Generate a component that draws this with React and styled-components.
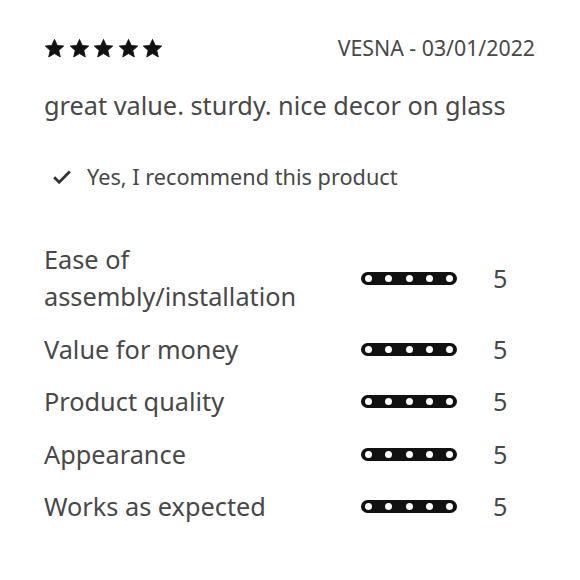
import React from "react";
import styled, { createGlobalStyle } from "styled-components";

const GlobalStyle = createGlobalStyle`
  body {
    margin: 0;
    background: #fff;
    font-family: "Noto Sans", "Open Sans", sans-serif;
    color: #484848;
  }
`;

const StyledReview = styled.div`
  padding: 36px 45px 0 44px;
`;

const StyledHeader = styled.div`
  display: flex;
  align-items: center;
  justify-content: space-between;
  height: 24px;
`;

const StyledStars = styled.div`
  display: flex;
  gap: 3.5px;
`;

const StyledAuthor = styled.span`
  font-size: 21.3px;
  line-height: 24px;
  color: #484848;
`;

const StyledText = styled.p`
  margin: 27px 0 0;
  font-size: 25.3px;
  line-height: 36px;
`;

const StyledRecommend = styled.div`
  display: flex;
  align-items: center;
  gap: 16px;
  margin: 40px 0 0 9px;
  font-size: 21.7px;
  line-height: 28px;
`;

const StyledRatings = styled.div`
  display: flex;
  flex-direction: column;
  gap: 15.5px;
  margin-top: 50px;
`;

const StyledRow = styled.div`
  display: grid;
  grid-template-columns: 1fr 96px 78px;
  align-items: center;
  font-size: 25.3px;
  line-height: 37px;
`;

const StyledLabel = styled.span`
  padding-right: 30px;
`;

const StyledBar = styled.div`
  display: flex;
  align-items: center;
  justify-content: space-between;
  height: 13px;
  padding: 0 4px;
  border-radius: 7px;
  background: #111;
`;

const StyledDot = styled.span`
  width: 7px;
  height: 7px;
  border-radius: 50%;
  background: ${({ filled }) => (filled ? "#fff" : "#111")};
`;

const StyledScore = styled.span`
  padding-left: 36px;
`;

const Star = () => (
  <svg width="21" height="21" viewBox="0 0 24 24">
    <path
      d="M12 1.6l3.1 6.9 7.4.7-5.6 5 1.7 7.4L12 17.8l-6.6 3.8 1.7-7.4-5.6-5 7.4-.7z"
      fill="#111"
      stroke="#111"
      strokeWidth="1"
      strokeLinejoin="round"
    />
  </svg>
);

const Check = () => (
  <svg width="18" height="14" viewBox="0 0 18 14">
    <path d="M1.2 7.2l5 5L16.8 1.6" fill="none" stroke="#333" strokeWidth="2.8" />
  </svg>
);

const ratings = [
  { label: "Ease of assembly/installation", value: 5 },
  { label: "Value for money", value: 5 },
  { label: "Product quality", value: 5 },
  { label: "Appearance", value: 5 },
  { label: "Works as expected", value: 5 },
];

const App = () => (
  <StyledReview>
    <GlobalStyle />
    <StyledHeader>
      <StyledStars>
        {[0, 1, 2, 3, 4].map((i) => (
          <Star key={i} />
        ))}
      </StyledStars>
      <StyledAuthor>VESNA - 03/01/2022</StyledAuthor>
    </StyledHeader>
    <StyledText>great value. sturdy. nice decor on glass</StyledText>
    <StyledRecommend>
      <Check />
      Yes, I recommend this product
    </StyledRecommend>
    <StyledRatings>
      {ratings.map(({ label, value }) => (
        <StyledRow key={label}>
          <StyledLabel>{label}</StyledLabel>
          <StyledBar>
            {[1, 2, 3, 4, 5].map((n) => (
              <StyledDot key={n} filled={n <= value} />
            ))}
          </StyledBar>
          <StyledScore>{value}</StyledScore>
        </StyledRow>
      ))}
    </StyledRatings>
  </StyledReview>
);

export default App;
